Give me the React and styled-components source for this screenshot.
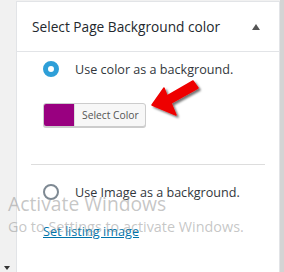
import React from "react";
import styled, { createGlobalStyle } from "styled-components";

const Global = createGlobalStyle`
  html, body { margin: 0; padding: 0; }
  body {
    background: #f1f1f1;
    font-family: "Open Sans", "Noto Sans", sans-serif;
    color: #444;
    width: 284px;
    height: 272px;
    overflow: hidden;
  }
`;

const Page = styled.div`
  position: relative;
  display: flex;
  height: 272px;
  width: 284px;
`;

const Gutter = styled.div`
  width: 16px;
  flex: none;
  position: relative;
  background: #f1f1f1;
`;

const ScrollArrow = styled.div`
  position: absolute;
  left: 4px;
  bottom: 2px;
  width: 0;
  height: 0;
  border-left: 3px solid transparent;
  border-right: 3px solid transparent;
  border-top: 4px solid #333;
`;

const Panel = styled.div`
  flex: 1;
  margin-top: 1px;
  background: #fff;
  border-left: 1px solid #e2e4e7;
  border-top: 1px solid #e2e4e7;
  border-right: 1px solid #e2e4e7;
`;

const Header = styled.div`
  height: 49px;
  display: flex;
  align-items: center;
  justify-content: space-between;
  padding: 0 19px 0 15px;
  border-bottom: 1px solid #e2e4e7;
  font-size: 13.7px;
  color: #23282d;
`;

const Caret = styled.span`
  width: 0;
  height: 0;
  border-left: 4px solid transparent;
  border-right: 4px solid transparent;
  border-bottom: 6px solid #555;
`;

const Body = styled.div`
  padding: 9px 14px 0 14px;
`;

const Option = styled.label`
  display: flex;
  align-items: center;
  gap: 16px;
  padding-left: 12px;
  height: 16px;
  font-size: 12.6px;
  color: #32373c;
`;

const Radio = styled.span`
  box-sizing: border-box;
  width: 16px;
  height: 16px;
  border-radius: 50%;
  flex: none;
  border: ${(p) => (p.$checked ? "5px solid #2e9fd8" : "2px solid #7e8993")};
  background: #fff;
`;

const ColorButton = styled.button`
  margin: 26px 0 0 12px;
  display: flex;
  align-items: stretch;
  height: 24px;
  padding: 0;
  border: 1px solid #ccc;
  border-radius: 3px;
  background: #f7f7f7;
  box-shadow: 0 1px 0 #ccc;
  overflow: hidden;
  cursor: pointer;
`;

const Swatch = styled.span`
  width: 30px;
  background: ${(p) => p.$color};
`;

const ButtonText = styled.span`
  display: flex;
  align-items: center;
  padding: 0 6px 0 7px;
  border-left: 1px solid #ddd;
  font-family: "Open Sans", "Noto Sans", sans-serif;
  font-size: 10.3px;
  color: #555;
`;

const Divider = styled.hr`
  margin: 37px 0 0 0;
  border: none;
  border-top: 1px solid #ddd;
`;

const Section = styled.div`
  padding-top: 19px;
`;

const Link = styled.a`
  display: inline-block;
  margin: 22px 0 0 12px;
  font-size: 12.7px;
  color: #0073aa;
  text-decoration: underline;
`;

const Watermark = styled.div`
  position: absolute;
  left: 8px;
  top: 191px;
  pointer-events: none;
  font-family: "Open Sans", "Noto Sans", sans-serif;
  color: rgba(150, 150, 150, 0.55);
`;

const WmTitle = styled.div`
  font-size: 19.3px;
  line-height: 26px;
`;

const WmSub = styled.div`
  font-size: 14.4px;
  line-height: 20px;
`;

const Arrow = styled.svg`
  position: absolute;
  left: 140px;
  top: 70px;
  pointer-events: none;
`;

const Scroll = styled.div`
  width: 4px;
  flex: none;
  background: #d4d4d4;
`;

export default function App() {
  return (
    <>
      <Global />
      <Page>
        <Gutter>
          <ScrollArrow />
        </Gutter>
        <Panel>
          <Header>
            <span>Select Page Background color</span>
            <Caret />
          </Header>
          <Body>
            <Option>
              <Radio $checked />
              Use color as a background.
            </Option>
            <ColorButton>
              <Swatch $color="#990080" />
              <ButtonText>Select Color</ButtonText>
            </ColorButton>
            <Divider />
            <Section>
              <Option>
                <Radio />
                Use Image as a background.
              </Option>
              <Link href="#">Set listing image</Link>
            </Section>
          </Body>
        </Panel>
        <Scroll />
        <Arrow width="80" height="60" viewBox="0 0 80 60">
          <defs>
            <filter id="sh" x="-20%" y="-20%" width="150%" height="150%">
              <feDropShadow dx="2" dy="2" stdDeviation="1.2" floodColor="#000" floodOpacity="0.55" />
            </filter>
          </defs>
          <polygon
            points="12,35 24,18 27,26 53,11 58,18 31,33 36,45"
            fill="#ee0000"
            stroke="#ee0000"
            strokeWidth="1.5"
            strokeLinejoin="round"
            filter="url(#sh)"
          />
        </Arrow>
        <Watermark>
          <WmTitle>Activate Windows</WmTitle>
          <WmSub>Go to Settings to activate Windows.</WmSub>
        </Watermark>
      </Page>
    </>
  );
}
